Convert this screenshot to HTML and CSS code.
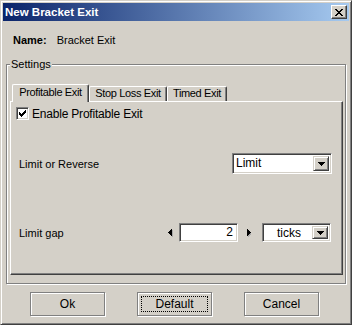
FILE: index.html
```html
<!DOCTYPE html>
<html>
<head>
<meta charset="utf-8">
<link rel="stylesheet" href="styles.css">
</head>
<body>
<div class="window">
  <div class="titlebar">
    <span class="title">New Bracket Exit</span>
    <span class="close">
      <svg width="8" height="7" viewBox="0 0 8 7"><path fill="#000" d="M0 0h2v1h-2z M6 0h2v1h-2z M1 1h2v1h-2z M5 1h2v1h-2z M2 2h4v1h-4z M3 3h2v1h-2z M2 4h4v1h-4z M1 5h2v1h-2z M5 5h2v1h-2z M0 6h2v1h-2z M6 6h2v1h-2z"/></svg>
    </span>
  </div>
  <div class="body">
    <div class="name-row"><span class="bold">Name:</span><span>Bracket Exit</span></div>
    <div class="group">
      <div class="legend">Settings</div>
      <div class="tabs">
        <div class="tab selected tab-profit">Profitable Exit</div>
        <div class="tab tab-stop">Stop Loss Exit</div>
        <div class="tab tab-timed">Timed Exit</div>
      </div>
      <div class="panel">
        <div class="check-row">
          <span class="checkbox"><svg width="9" height="9" viewBox="0 0 9 9"><path fill="#000" d="M6 0h1v1h-1z M5 1h2v1h-2z M0 2h1v1h-1z M4 2h3v1h-3z M0 3h2v1h-2z M3 3h3v1h-3z M0 4h5v1h-5z M1 5h3v1h-3z M2 6h1v1h-1z" transform="translate(1,1)"/></svg></span>
          <span class="check-label">Enable Profitable Exit</span>
        </div>
        <div class="field-row row-reverse">
          <span>Limit or Reverse</span>
          <div class="combo combo-wide">
            <span class="combo-text">Limit</span>
            <span class="combo-btn"><svg width="7" height="4" viewBox="0 0 7 4"><path fill="#000" d="M0 0h7v1h-7z M1 1h5v1h-5z M2 2h3v1h-3z M3 3h1v1h-1z"/></svg></span>
          </div>
        </div>
        <div class="field-row row-gap">
          <span>Limit gap</span>
          <div class="controls">
            <span class="spin spin-left"><svg width="5" height="8" viewBox="0 0 5 8"><path fill="#a8a8a8" d="M4 1h1v7h-1z M3 2h1v5h-1z M2 3h1v3h-1z"/><path fill="#000" d="M3 0h1v7h-1z M2 1h1v5h-1z M1 2h1v3h-1z M0 3h1v1h-1z"/></svg></span>
            <div class="textbox">2</div>
            <span class="spin spin-right"><svg width="5" height="8" viewBox="0 0 5 8"><path fill="#a8a8a8" d="M1 1h1v7h-1z M2 2h1v5h-1z M3 3h1v3h-1z"/><path fill="#000" d="M0 0h1v7h-1z M1 1h1v5h-1z M2 2h1v3h-1z M3 3h1v1h-1z"/></svg></span>
            <div class="combo combo-narrow">
              <span class="combo-text centered">ticks</span>
              <span class="combo-btn"><svg width="7" height="4" viewBox="0 0 7 4"><path fill="#000" d="M0 0h7v1h-7z M1 1h5v1h-5z M2 2h3v1h-3z M3 3h1v1h-1z"/></svg></span>
            </div>
          </div>
        </div>
      </div>
    </div>
    <div class="buttons">
      <div class="btn"><span class="btn-face">Ok</span></div>
      <div class="btn"><span class="btn-face focus">Default</span></div>
      <div class="btn"><span class="btn-face">Cancel</span></div>
    </div>
  </div>
</div>
</body>
</html>
```

FILE: styles.css
```css
html, body {
  margin: 0;
  padding: 0;
  background: #d4d0c8;
}

body {
  font-family: "Liberation Sans", Arial, sans-serif;
  font-size: 11px;
  color: #000;
}

.window {
  width: 352px;
  height: 325px;
  box-sizing: border-box;
  background: #d4d0c8;
  border: 1px solid;
  border-color: #d4d0c8 #404040 #404040 #d4d0c8;
  box-shadow: inset 1px 1px #fff, inset -1px -1px #808080;
  padding: 2px;
  display: flex;
  flex-direction: column;
}

.titlebar {
  height: 18px;
  flex: none;
  display: flex;
  align-items: center;
  justify-content: space-between;
  padding: 0 2px 0 2px;
  background: linear-gradient(to right, #0a246a, #a6caf0);
}

.title {
  color: #fff;
  font-weight: bold;
  font-size: 11.5px;
  line-height: 13px;
}

.close {
  width: 16px;
  height: 14px;
  box-sizing: border-box;
  background: #d4d0c8;
  border: 1px solid;
  border-color: #fff #404040 #404040 #fff;
  box-shadow: inset -1px -1px #808080;
  display: flex;
  align-items: center;
  justify-content: center;
  padding-right: 1px;
}

.close svg {
  display: block;
}

.body {
  flex: 1;
  display: flex;
  flex-direction: column;
}

.name-row {
  margin-top: 13px;
  padding-left: 10px;
  display: flex;
  gap: 10px;
  line-height: 13px;
  height: 13px;
}

.bold {
  font-weight: bold;
}

.group {
  margin: 17px 0 0 3px;
  width: 340px;
  height: 220px;
  box-sizing: border-box;
  border: 1px solid #808080;
  box-shadow: inset 1px 1px #fff, 1px 1px #fff;
  padding: 0 2px 0 3px;
  display: flex;
  flex-direction: column;
}

.legend {
  align-self: flex-start;
  margin-top: -7px;
  padding: 0 1px;
  line-height: 13px;
  height: 13px;
  background: #d4d0c8;
}

.tabs {
  margin-top: 13px;
  margin-left: 2px;
  height: 17px;
  display: flex;
  align-items: flex-end;
}

.tab {
  box-sizing: border-box;
  height: 15px;
  padding: 0;
  line-height: 13px;
  text-align: center;
  letter-spacing: -0.35px;
  background: #d4d0c8;
  border-left: 1px solid #fff;
  border-top: 1px solid #fff;
  border-right: 1px solid #404040;
  box-shadow: inset -1px 0 #808080;
  border-top-left-radius: 2px;
  border-top-right-radius: 2px;
  white-space: nowrap;
  overflow: hidden;
}

.tab-profit {
  width: 77px;
}

.tab-stop {
  width: 78px;
}

.tab-timed {
  width: 60px;
}

.tab.selected {
  height: 18px;
  margin-bottom: -1px;
  position: relative;
  z-index: 1;
  padding-top: 1px;
}

.panel {
  width: 333px;
  height: 174px;
  box-sizing: border-box;
  border-left: 1px solid #fff;
  border-top: 1px solid #fff;
  border-right: 1px solid #404040;
  border-bottom: 1px solid #404040;
  box-shadow: inset -1px -1px #808080;
  padding: 5px 10px 0 5px;
  display: flex;
  flex-direction: column;
}

.check-row {
  display: flex;
  align-items: center;
  height: 13px;
  gap: 3px;
}

.checkbox {
  width: 13px;
  height: 13px;
  box-sizing: border-box;
  background: #fff;
  border: 1px solid;
  border-color: #808080 #fff #fff #808080;
  box-shadow: inset 1px 1px #404040, inset -1px -1px #d4d0c8;
  display: flex;
}

.checkbox svg {
  display: block;
  margin: 1px 0 0 1px;
}

.check-label {
  font-size: 12px;
  letter-spacing: -0.2px;
  line-height: 14px;
}

.field-row {
  display: flex;
  align-items: center;
  justify-content: space-between;
  padding-left: 3px;
}

.row-reverse {
  margin-top: 33px;
  height: 21px;
}

.row-gap {
  margin-top: 49px;
  height: 19px;
}

.controls {
  display: flex;
  align-items: center;
}

.spin {
  display: flex;
  width: 5px;
}

.spin svg {
  display: block;
}

.spin-left {
  margin-right: 6px;
}

.spin-right {
  margin-left: 9px;
  margin-right: 10px;
}

.combo {
  box-sizing: border-box;
  background: #fff;
  border: 1px solid;
  border-color: #808080 #fff #fff #808080;
  box-shadow: inset 1px 1px #404040, inset -1px -1px #d4d0c8;
  padding: 2px 2px 2px 2px;
  display: flex;
  align-items: stretch;
}

.combo-wide {
  width: 100px;
  height: 21px;
}

.combo-narrow {
  width: 69px;
  height: 19px;
  margin-right: 1px;
}

.combo-text {
  flex: 1;
  font-size: 12px;
  line-height: 15px;
  padding-left: 1px;
}

.combo-text.centered {
  text-align: center;
  line-height: 15px;
}

.combo-btn {
  width: 16px;
  box-sizing: border-box;
  background: #d4d0c8;
  border: 1px solid;
  border-color: #d4d0c8 #404040 #404040 #d4d0c8;
  box-shadow: inset 1px 1px #fff, inset -1px -1px #808080;
  display: flex;
  align-items: center;
  justify-content: center;
}

.combo-btn svg {
  display: block;
}

.textbox {
  box-sizing: border-box;
  width: 59px;
  height: 19px;
  background: #fff;
  border: 1px solid;
  border-color: #808080 #fff #fff #808080;
  box-shadow: inset 1px 1px #404040, inset -1px -1px #d4d0c8;
  font-size: 12px;
  line-height: 15px;
  padding: 1px 4px 0 2px;
  text-align: right;
}

.buttons {
  display: flex;
  gap: 32px;
  margin-top: 8px;
  padding-left: 27px;
}

.btn {
  width: 75px;
  height: 24px;
  box-sizing: border-box;
  background: #d4d0c8;
  border: 1px solid #808080;
  box-shadow: inset 1px 1px #fff, 1px 1px #fff;
  padding: 3px;
  display: flex;
}

.btn-face {
  flex: 1;
  border: 1px dotted transparent;
  display: flex;
  align-items: center;
  justify-content: center;
  font-size: 12px;
}

.btn-face.focus {
  border-color: #000;
}
```
